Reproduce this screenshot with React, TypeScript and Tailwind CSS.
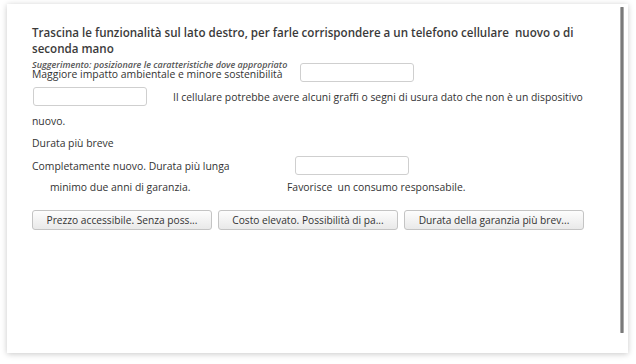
const inputCls = "inline-block h-[19px] w-[114px] rounded-[3px] border border-[#cfcfcf] bg-white";

function Slot({ className = "" }: { className?: string }) {
  return <span className={`${inputCls} ${className}`} />;
}

function Chip({ label }: { label: string }) {
  return (
    <button className="h-[20px] w-[180px] rounded-[3px] border border-[#c4c4c4] bg-gradient-to-b from-[#fdfdfd] to-[#e9e9e9] text-[10.2px] leading-none text-[#333]">
      {label}
    </button>
  );
}

export default function App() {
  return (
    <div className="h-[364px] w-[636px] bg-white pl-[7px] pt-[4px] font-['Open_Sans',sans-serif] text-[#333]">
      <div className="relative h-[349px] w-[621px] bg-white pl-[25px] pt-[21px] shadow-[0_1px_6px_rgba(0,0,0,0.22)]">
        {/* scrollbar */}
        <div className="absolute right-[4px] top-[3px] h-[326px] w-[4px] rounded-[1px] border-x border-[#aaa] bg-[#7a7a7a]" />

        <h1 className="w-[570px] text-[11.6px] font-semibold leading-[16px] text-[#3a3a3a]">
          Trascina le funzionalità sul lato destro, per farle corrispondere a un telefono cellulare&nbsp; nuovo o di seconda mano
        </h1>
        <p className="mt-[3px] text-[9px] font-semibold italic leading-[9px] text-[#555]">
          Suggerimento: posizionare le caratteristiche dove appropriato
        </p>

        <div className="text-[10.4px] leading-[14px]">
          <div className="-mt-[2px] flex items-start">
            <span>Maggiore impatto ambientale e minore sostenibilità</span>
            <Slot className="ml-[17px] mt-[-4px]" />
          </div>
          <div className="mt-[5px] flex items-center">
            <Slot className="ml-[1px]" />
            <span className="ml-[26px]">Il cellulare potrebbe avere alcuni graffi o segni di usura dato che non è un dispositivo</span>
          </div>
          <p className="mt-[8px]">nuovo.</p>
          <p className="mt-[8px]">Durata più breve</p>
          <div className="mt-[6px] flex items-center">
            <span>Completamente nuovo. Durata più lunga</span>
            <Slot className="ml-[65px]" />
          </div>
          <div className="mt-[5px] flex">
            <span className="ml-[18px] w-[237px]">minimo due anni di garanzia.</span>
            <span>Favorisce&nbsp; un consumo responsabile.</span>
          </div>
        </div>

        <div className="mt-[16px] flex gap-[6px]">
          <Chip label="Prezzo accessibile. Senza poss..." />
          <Chip label="Costo elevato. Possibilità di pa..." />
          <Chip label="Durata della garanzia più brev..." />
        </div>
      </div>
    </div>
  );
}
